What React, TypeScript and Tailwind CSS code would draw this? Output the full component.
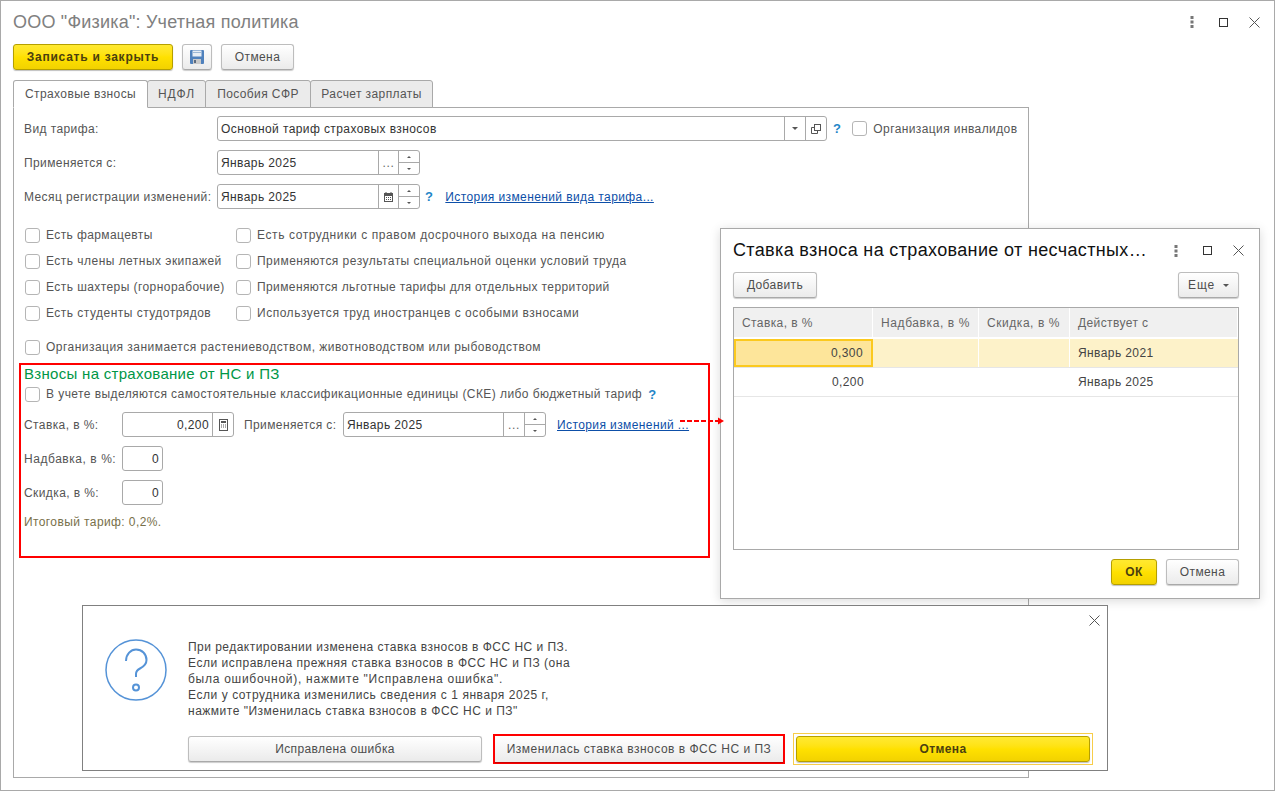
import React from 'react';

const font = "font-['Liberation_Sans',Arial,sans-serif]";

const Dots = () => (
  <svg width="4" height="12" viewBox="0 0 4 12" fill="#777777">
    <rect x="0.5" y="0" width="3" height="3" />
    <rect x="0.5" y="4.5" width="3" height="3" />
    <rect x="0.5" y="9" width="3" height="3" />
  </svg>
);

const Square = () => (
  <svg width="9" height="9" viewBox="0 0 9 9" fill="none" stroke="#333333" strokeWidth="1">
    <rect x="0.5" y="0.5" width="8" height="8" />
  </svg>
);

const Cross = ({ size = 11 }: { size?: number }) => (
  <svg width={size} height={size} viewBox="0 0 11 11" fill="none" stroke="#555555" strokeWidth="1">
    <path d="M0.5 0.5L10.5 10.5M10.5 0.5L0.5 10.5" />
  </svg>
);

const WindowIcons = () => (
  <div className="flex items-center">
    <Dots />
    <div className="ml-[25px]">
      <Square />
    </div>
    <div className="ml-[21px]">
      <Cross />
    </div>
  </div>
);

const FloppyIcon = () => (
  <svg width="14" height="14" viewBox="0 0 14 14">
    <rect x="0" y="0" width="14" height="14" rx="1" fill="#4f81bd" />
    <rect x="2.5" y="0.5" width="9" height="6" fill="#e8eef5" />
    <rect x="2" y="2" width="10" height="1" fill="#9db8d6" />
    <rect x="3" y="9" width="8" height="5" fill="#c9c9c9" />
    <rect x="4" y="10" width="2" height="3" fill="#5b6b80" />
  </svg>
);

const CalendarIcon = () => (
  <svg width="9" height="10" viewBox="0 0 9 10">
    <rect x="0" y="1" width="9" height="9" fill="#555555" />
    <rect x="1.5" y="0" width="1" height="2" fill="#555555" />
    <rect x="6.5" y="0" width="1" height="2" fill="#555555" />
    <rect x="1" y="4" width="7" height="5" fill="#ffffff" />
    <path d="M2 5h1v1H2zM4 5h1v1H4zM6 5h1v1H6zM2 7h1v1H2zM4 7h1v1H4zM6 7h1v1H6z" fill="#555555" />
  </svg>
);

const CalcIcon = () => (
  <svg width="9" height="12" viewBox="0 0 9 12">
    <rect x="0.5" y="0.5" width="8" height="11" fill="none" stroke="#555555" />
    <rect x="2" y="2" width="5" height="2" fill="#555555" />
    <path d="M2 5.5h1v1H2zM4 5.5h1v1H4zM6 5.5h1v1H6zM2 7.5h1v1H2zM4 7.5h1v1H4zM6 7.5h1v1H6z" fill="#555555" />
  </svg>
);

const OpenIcon = () => (
  <svg width="10" height="10" viewBox="0 0 10 10" fill="none" stroke="#555555">
    <rect x="3.5" y="0.5" width="6" height="6" />
    <path d="M3.5 3.5H0.5V9.5H6.5V6.5" />
  </svg>
);

const Caret = () => <div className="w-0 h-0 border-x-[3px] border-x-transparent border-t-[3px] border-t-[#555555]" />;

const Ellipsis = () => <span className="text-[12px] tracking-[0.6px] text-[#666666]">...</span>;

const Spin = () => (
  <div className="w-[21px] h-full flex flex-col border-l border-[#a9a9a9]">
    <div className="flex-1 flex items-center justify-center border-b border-[#a9a9a9]">
      <div className="w-0 h-0 border-x-[2px] border-x-transparent border-b-[2px] border-b-[#555555]" />
    </div>
    <div className="flex-1 flex items-center justify-center">
      <div className="w-0 h-0 border-x-[2px] border-x-transparent border-t-[2px] border-t-[#555555]" />
    </div>
  </div>
);

const Help = () => <span className="text-[#1f86c8] font-bold text-[13px] leading-none">?</span>;

const Btn = ({ children, className = '' }: { children: React.ReactNode; className?: string }) => (
  <div
    className={`h-[26px] flex items-center justify-center rounded-[3px] border border-[#bdbdbd] border-b-[#a9a9a9] bg-gradient-to-b from-white to-[#ebebeb] text-[#4d4d4d] text-[12px] tracking-[0.4px] shadow-[0_1px_1px_rgba(0,0,0,0.2)] ${className}`}
  >
    {children}
  </div>
);

const YellowBtn = ({ children, className = '' }: { children: React.ReactNode; className?: string }) => (
  <div
    className={`h-[26px] flex items-center justify-center rounded-[3px] border border-[#b59f00] bg-gradient-to-b from-[#ffe930] via-[#ffe100] to-[#f2d200] text-[#4a3f10] text-[12px] font-bold tracking-[0.4px] shadow-[0_1px_1px_rgba(0,0,0,0.25)] ${className}`}
  >
    {children}
  </div>
);

const Field = ({
  width,
  text,
  right,
  children,
}: {
  width: string;
  text: string;
  right?: boolean;
  children?: React.ReactNode;
}) => (
  <div className={`${width} h-[25px] flex items-stretch border border-[#a9a9a9] rounded-[3px] bg-white`}>
    <div className={`flex-1 min-w-0 flex items-center px-[3px] text-[#333333] ${right ? 'justify-end' : ''}`}>{text}</div>
    {children}
  </div>
);

const IconCell = ({ w, children }: { w: string; children: React.ReactNode }) => (
  <div className={`${w} flex items-center justify-center border-l border-[#a9a9a9] text-[#777777]`}>{children}</div>
);

const Label = ({ children, className = '' }: { children: React.ReactNode; className?: string }) => (
  <div className={`flex items-center ${className}`}>{children}</div>
);

const Check = ({
  label,
  className = '',
  labelClass = '',
}: {
  label: string;
  className?: string;
  labelClass?: string;
}) => (
  <div className={`flex items-center h-[26px] ${className}`}>
    <div className="w-[15px] h-[15px] ml-[1px] border border-[#b5b5b5] rounded-[3px] bg-white shrink-0" />
    <span className={`ml-[6px] whitespace-nowrap ${labelClass}`}>{label}</span>
  </div>
);

const Link = ({ children }: { children: React.ReactNode }) => (
  <span className="text-[#0d4fa8] underline whitespace-nowrap">{children}</span>
);

const Tab = ({ label, width, active }: { label: React.ReactNode; width: string; active?: boolean }) => (
  <div
    className={`${width} h-[28px] -mb-px flex items-center justify-center border border-[#a9a9a9] rounded-t-[3px] -mr-px ${
      active ? 'bg-white border-b-white z-10' : 'bg-[#ebebeb]'
    }`}
  >
    <span className="pb-[1px]">{label}</span>
  </div>
);

const HeadCell = ({ width, children }: { width: string; children: React.ReactNode }) => (
  <div className={`${width} h-full flex items-center pl-[8px] bg-[#f0f0f0] border-r border-white`}>{children}</div>
);

const TarifDialog = () => (
  <div className="absolute left-[720px] top-[228px] w-[540px] h-[371px] bg-white border border-[#a9a9a9] shadow-[0_2px_10px_rgba(0,0,0,0.15)] z-20 flex flex-col pl-[12px] pr-[20px]">
    <div className="h-[43px] flex items-center justify-between">
      <div className="text-[18px] text-[#111111] whitespace-nowrap tracking-[0.35px]">Ставка взноса на страхование от несчастных…</div>
      <div className="mr-[-5px]">
        <WindowIcons />
      </div>
    </div>
    <div className="flex justify-between">
      <Btn className="w-[84px]">Добавить</Btn>
      <Btn className="w-[61px]">
        <span className="tracking-[0.8px]">Еще</span>
        <div className="ml-[8px]">
          <Caret />
        </div>
      </Btn>
    </div>
    <div className="mt-[9px] h-[243px] border border-[#a9a9a9] flex flex-col">
      <div className="h-[31px] flex border-b-2 border-white text-[#666666]">
        <HeadCell width="w-[139px]">Ставка, в %</HeadCell>
        <HeadCell width="w-[106px]">
          <span className="tracking-[0.6px]">Надбавка, в %</span>
        </HeadCell>
        <HeadCell width="w-[91px]">
          <span className="tracking-[0.55px]">Скидка, в %</span>
        </HeadCell>
        <HeadCell width="flex-1">Действует с</HeadCell>
      </div>
      <div className="h-[29px] flex bg-[#fdf2c9] border-b border-[#e6e6e6] text-[#444444]">
        <div className="w-[139px] flex items-center justify-end pr-[8px] bg-[#fde59a] border-2 border-[#fbc91e]">0,300</div>
        <div className="w-[106px] border-r border-white" />
        <div className="w-[91px] border-r border-white" />
        <div className="flex-1 flex items-center pl-[8px]">Январь 2021</div>
      </div>
      <div className="h-[29px] flex border-b border-[#e6e6e6] text-[#444444]">
        <div className="w-[139px] flex items-center justify-end pr-[9px]">0,200</div>
        <div className="w-[106px]" />
        <div className="w-[91px]" />
        <div className="flex-1 flex items-center pl-[8px]">Январь 2025</div>
      </div>
    </div>
    <div className="mt-[9px] flex justify-end gap-[9px]">
      <YellowBtn className="w-[46px]">ОК</YellowBtn>
      <Btn className="w-[73px]">Отмена</Btn>
    </div>
  </div>
);

const QuestionIcon = () => (
  <svg width="62" height="62" viewBox="0 0 62 62" fill="none" stroke="#5593d7" strokeWidth="1.5">
    <circle cx="31" cy="31" r="30" />
    <path d="M21 22C21 15 26 10.5 31 10.5C37 10.5 41.5 15 41.5 21C41.5 26 38 28 35 29.5C32 31 31 32.5 31 35V38" strokeWidth="2" />
    <circle cx="31" cy="48.5" r="3" strokeWidth="2" />
  </svg>
);

const AskDialog = () => (
  <div className="absolute left-[82px] top-[605px] w-[1026px] h-[166px] bg-white border border-[#808080] z-30 flex">
    <div className="absolute right-[7px] top-[9px]">
      <Cross />
    </div>
    <div className="ml-[22px] mt-[33px]">
      <QuestionIcon />
    </div>
    <div className="ml-[21px] flex flex-col">
      <div className="mt-[33px] h-[80px] leading-[16px] text-[#444444] whitespace-nowrap">
        <div className="tracking-[0.47px]">При редактировании изменена ставка взносов в ФСС НС и ПЗ.</div>
        <div className="tracking-[0.54px]">Если исправлена прежняя ставка взносов в ФСС НС и ПЗ (она</div>
        <div className="tracking-[0.73px]">была ошибочной), нажмите "Исправлена ошибка".</div>
        <div className="tracking-[0.56px]">Если у сотрудника изменились сведения с 1 января 2025 г,</div>
        <div className="tracking-[0.5px]">нажмите "Изменилась ставка взносов в ФСС НС и ПЗ"</div>
      </div>
      <div className="mt-[14px] flex items-center">
        <Btn className="w-[294px]">Исправлена ошибка</Btn>
        <div className="ml-[11px] border-2 border-[#ff0000] -my-[1px]">
          <Btn className="w-[288px] h-[24px] rounded-none border-0">
            <span className="tracking-[0.5px]">Изменилась ставка взносов в ФСС НС и ПЗ</span>
          </Btn>
        </div>
        <div className="ml-[8px] border border-[#f7cd4a] p-[2px]">
          <YellowBtn className="w-[294px]">Отмена</YellowBtn>
        </div>
      </div>
    </div>
  </div>
);

const App = () => {
  return (
    <div className={`relative w-[1275px] h-[791px] overflow-hidden bg-white text-[12px] tracking-[0.4px] text-[#555555] ${font}`}>
      <div className="w-full h-full border border-[#a9a9a9] flex flex-col pl-[12px] pr-[9px]">
        <div className="h-[43px] flex items-center justify-between">
          <div className="text-[18px] text-[#808080] tracking-[0.2px] whitespace-nowrap">ООО "Физика": Учетная политика</div>
          <div className="mr-[5px] mb-[1px]">
            <WindowIcons />
          </div>
        </div>
        <div className="flex">
          <YellowBtn className="w-[160px]">
            <span className="tracking-[0.75px]">Записать и закрыть</span>
          </YellowBtn>
          <Btn className="w-[30px] ml-[9px]">
            <FloppyIcon />
          </Btn>
          <Btn className="w-[73px] ml-[9px]">Отмена</Btn>
        </div>
        <div className="mt-[10px] flex relative">
          <Tab label="Страховые взносы" width="w-[135px]" active />
          <Tab label={<span className="tracking-[1px]">НДФЛ</span>} width="w-[59px]" />
          <Tab label="Пособия СФР" width="w-[106px]" />
          <Tab label="Расчет зарплаты" width="w-[123px]" />
        </div>
        <div className="w-[1016px] h-[671px] border border-[#a9a9a9] pl-[10px] pt-[8px] flex flex-col">
          <div className="flex h-[25px]">
            <Label className="w-[193px]">Вид тарифа:</Label>
            <Field width="w-[610px]" text="Основной тариф страховых взносов">
              <IconCell w="w-[21px]">
                <Caret />
              </IconCell>
              <IconCell w="w-[21px]">
                <OpenIcon />
              </IconCell>
            </Field>
            <div className="ml-[6px] flex items-center">
              <Help />
            </div>
            <Check label="Организация инвалидов" className="ml-[10px] !h-[25px]" />
          </div>
          <div className="flex h-[25px] mt-[9px]">
            <Label className="w-[193px]">Применяется с:</Label>
            <Field width="w-[203px]" text="Январь 2025">
              <IconCell w="w-[20px]">
                <Ellipsis />
              </IconCell>
              <Spin />
            </Field>
          </div>
          <div className="flex h-[25px] mt-[9px]">
            <Label className="w-[193px] whitespace-nowrap">Месяц регистрации изменений:</Label>
            <Field width="w-[203px]" text="Январь 2025">
              <IconCell w="w-[20px]">
                <CalendarIcon />
              </IconCell>
              <Spin />
            </Field>
            <div className="ml-[5px] flex items-center">
              <Help />
            </div>
            <div className="ml-[12px] flex items-center">
              <Link>История изменений вида тарифа...</Link>
            </div>
          </div>
          <div className="mt-[13px] flex">
            <div className="w-[211px] flex flex-col">
              <Check label="Есть фармацевты" />
              <Check label="Есть члены летных экипажей" labelClass="tracking-[0.47px]" />
              <Check label="Есть шахтеры (горнорабочие)" labelClass="tracking-[0.44px]" />
              <Check label="Есть студенты студотрядов" labelClass="tracking-[0.48px]" />
            </div>
            <div className="flex flex-col">
              <Check label="Есть сотрудники с правом досрочного выхода на пенсию" labelClass="tracking-[0.59px]" />
              <Check label="Применяются результаты специальной оценки условий труда" labelClass="tracking-[0.47px]" />
              <Check label="Применяются льготные тарифы для отдельных территорий" labelClass="tracking-[0.39px]" />
              <Check label="Используется труд иностранцев с особыми взносами" labelClass="tracking-[0.52px]" />
            </div>
          </div>
          <Check
            label="Организация занимается растениеводством, животноводством или рыбоводством"
            className="mt-[8px]"
            labelClass="tracking-[0.47px]"
          />
          <div className="mt-[3px] -ml-[5px] w-[691px] h-[195px] border-2 border-[#ff0000] pl-[3px] flex flex-col">
            <div className="text-[15px] leading-[18px] text-[#009646] tracking-[0.3px] whitespace-nowrap">Взносы на страхование от НС и ПЗ</div>
            <div className="flex items-center h-[16px] mt-[3px]">
              <Check
                label="В учете выделяются самостоятельные классификационные единицы (СКЕ) либо бюджетный тариф"
                className="!h-[16px]"
                labelClass="tracking-[0.43px]"
              />
              <div className="ml-[6px] flex items-center">
                <Help />
              </div>
            </div>
            <div className="flex h-[25px] mt-[10px]">
              <Label className="w-[98px]">Ставка, в %:</Label>
              <Field width="w-[112px]" text="0,200" right>
                <IconCell w="w-[21px]">
                  <CalcIcon />
                </IconCell>
              </Field>
              <Label className="ml-[10px] w-[99px]">Применяется с:</Label>
              <Field width="w-[203px]" text="Январь 2025">
                <IconCell w="w-[21px]">
                  <Ellipsis />
                </IconCell>
                <Spin />
              </Field>
              <div className="ml-[11px] flex items-center">
                <Link>История изменений ...</Link>
              </div>
            </div>
            <div className="flex h-[25px] mt-[9px]">
              <Label className="w-[98px] tracking-[0.55px]">Надбавка, в %:</Label>
              <Field width="w-[41px]" text="0" right />
            </div>
            <div className="flex h-[25px] mt-[9px]">
              <Label className="w-[98px]">Скидка, в %:</Label>
              <Field width="w-[41px]" text="0" right />
            </div>
            <div className="mt-[9px] h-[16px] flex items-center text-[#78704a]">Итоговый тариф: 0,2%.</div>
          </div>
        </div>
      </div>

      <svg className="absolute left-[680px] top-[416px] z-40" width="45" height="10" viewBox="0 0 45 10" fill="#ff0000">
        <path d="M0 5H38" stroke="#ff0000" strokeWidth="2" strokeDasharray="5 2" fill="none" />
        <path d="M38 1.5l6 3.5-6 3.5z" />
      </svg>

      <TarifDialog />
      <AskDialog />
    </div>
  );
};

export default App;
